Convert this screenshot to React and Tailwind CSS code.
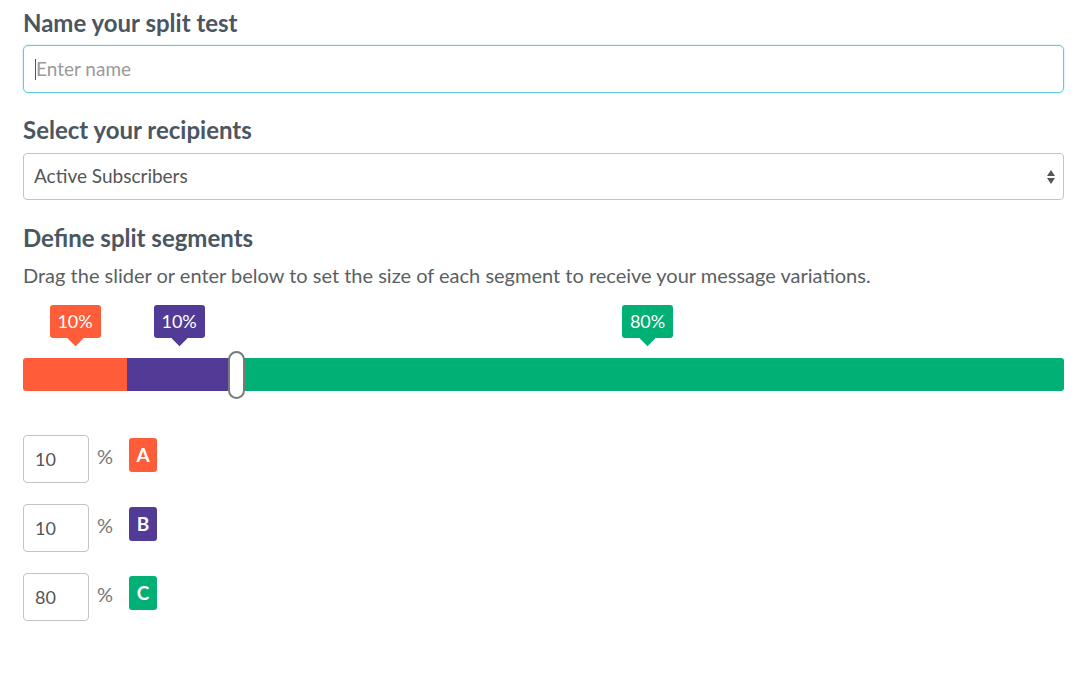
import { useState } from "react";

const segments = [
  { key: "A", value: 10, color: "bg-[#ff5c39]" },
  { key: "B", value: 10, color: "bg-[#523a97]" },
  { key: "C", value: 80, color: "bg-[#00b074]" },
];

const Tip = ({ value, color }) => (
  <div className="flex flex-col items-center">
    <div className={`${color} w-[51px] h-[33px] rounded-[3px] flex items-center justify-center text-white text-[18px]`}>
      {value}%
    </div>
    <div className={`${color} w-[11px] h-[11px] rotate-45 -mt-[5px]`} />
  </div>
);

const App = () => {
  const [name, setName] = useState("");

  return (
    <div className="min-h-screen bg-white px-[23px] pt-[8px] font-['Lato',sans-serif]">
      <h2 className="text-[24px] font-bold text-[#4a5661] leading-[30px]">Name your split test</h2>
      <div className="mt-[7px] h-[48px] rounded-[5px] border border-[#5fc6e6] shadow-[0_0_2px_rgba(95,198,230,0.6)] flex items-center px-[11px]">
        <div className="w-px h-[21px] bg-[#555]" />
        <input
          value={name}
          onChange={(e) => setName(e.target.value)}
          placeholder="Enter name"
          className="flex-1 outline-none text-[19px] text-[#555] placeholder:text-[#9a9a9a]"
        />
      </div>

      <h2 className="mt-[22px] text-[24px] font-bold text-[#4a5661] leading-[30px]">Select your recipients</h2>
      <div className="mt-[8px] h-[47px] rounded-[4px] border border-[#c4c4c4] flex items-center justify-between pl-[10px] pr-[7px]">
        <span className="text-[19px] text-[#555]">Active Subscribers</span>
        <svg width="10" height="18" viewBox="0 0 10 18">
          <path d="M5 2 L9 8 H1 Z" fill="#555" />
          <path d="M5 16 L9 10 H1 Z" fill="#555" />
        </svg>
      </div>

      <h2 className="mt-[23px] text-[24px] font-bold text-[#4a5661] leading-[30px]">Define split segments</h2>
      <p className="mt-[10px] text-[20px] text-[#5a5f63] leading-[24px]">
        Drag the slider or enter below to set the size of each segment to receive your message variations.
      </p>

      <div className="mt-[18px] flex">
        {segments.map((s) => (
          <div key={s.key} className="flex justify-center" style={{ width: `${s.value}%` }}>
            <Tip value={s.value} color={s.color} />
          </div>
        ))}
      </div>

      <div className="relative mt-[14px] h-[33px] flex">
        {segments.map((s, i) => (
          <div
            key={s.key}
            className={`${s.color} h-full ${i === 0 ? "rounded-l-[3px]" : ""} ${i === segments.length - 1 ? "rounded-r-[3px]" : ""}`}
            style={{ width: `${s.value}%` }}
          />
        ))}
        <div className="absolute left-[205px] -top-[7px] w-[17px] h-[48px] rounded-full bg-white border-2 border-[#777b80]" />
      </div>

      <div className="mt-[44px] flex flex-col gap-[21px]">
        {segments.map((s) => (
          <div key={s.key} className="flex items-start">
            <div className="w-[66px] h-[48px] rounded-[4px] border border-[#c4c4c4] flex items-center px-[11px] text-[18px] text-[#555]">
              {s.value}
            </div>
            <span className="ml-[8px] mt-[9px] text-[20px] leading-[24px] text-[#777]">%</span>
            <span className={`${s.color} ml-[16px] mt-[3px] w-[28px] h-[34px] rounded-[3px] flex items-center justify-center text-white text-[19px] font-bold`}>
              {s.key}
            </span>
          </div>
        ))}
      </div>
    </div>
  );
};

export default App;
